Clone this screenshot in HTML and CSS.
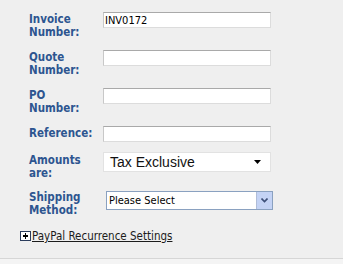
FILE: index.html
```html
<!DOCTYPE html>
<html lang="en">
<head>
  <meta charset="UTF-8">
  <title>Invoice Details</title>
  <link rel="stylesheet" href="styles.css">
</head>
<body>

  <div class="form">
    <div class="row">
      <label class="lbl">Invoice<br>Number:</label>
      <input class="txt" type="text" value="INV0172">
    </div>
    <div class="row">
      <label class="lbl">Quote<br>Number:</label>
      <input class="txt" type="text">
    </div>
    <div class="row">
      <label class="lbl">PO<br>Number:</label>
      <input class="txt" type="text">
    </div>
    <div class="row row-one">
      <label class="lbl">Reference:</label>
      <input class="txt" type="text">
    </div>
    <div class="row row-sel">
      <label class="lbl">Amounts<br>are:</label>
      <div class="amounts">
        <span>Tax Exclusive</span>
        <svg class="caret" width="7" height="4" viewBox="0 0 7 4"><path d="M0 0h7L3.5 4z" fill="#000"/></svg>
      </div>
    </div>
    <div class="row row-ship">
      <label class="lbl">Shipping<br>Method:</label>
      <div class="shipping">
        <span class="ship-val">Please Select</span>
        <span class="ship-btn">
          <svg width="7" height="5" viewBox="0 0 7 5"><path d="M0.5 0.5l3 3 3-3" fill="none" stroke="#3d4f78" stroke-width="1.6"/></svg>
        </span>
      </div>
    </div>

    <div class="more">
      <span class="plus"></span>
      <a href="#">PayPal Recurrence Settings</a>
    </div>
  </div>

  <div class="bottom"></div>

</body>
</html>
```

FILE: styles.css
```css
body {
  margin: 0;
  padding: 0;
  background: #efefef;
  font-family: 'DejaVu Sans Condensed', 'DejaVu Sans', sans-serif;
  font-size: 11px;
  height: 264px;
  display: flex;
  flex-direction: column;
}
.form {
  padding: 12px 0 0 29px;
  flex: 1;
}
.row {
  display: flex;
  align-items: flex-start;
  margin-bottom: 11px;
}
.lbl {
  width: 74px;
  padding-top: 1px;
  line-height: 13px;
  font-size: 11.5px;
  font-weight: bold;
  color: #2d5590;
}
.row-one {
  margin-bottom: 10px;
}
.txt {
  box-sizing: border-box;
  width: 168px;
  height: 16px;
  margin: 0;
  padding: 0 1px;
  font-family: inherit;
  font-size: 11px;
  color: #000;
  background: #fff;
  border: 1px solid #dcdcdc;
  border-top-color: #a9a9a9;
  border-left-color: #c8c8c8;
  outline: none;
}
.row-sel .lbl {
  padding-top: 2px;
}
.amounts {
  box-sizing: border-box;
  width: 168px;
  height: 20px;
  display: flex;
  align-items: center;
  justify-content: space-between;
  padding: 0 9px 0 6px;
  background: #fff;
  border: 1px solid #e2e2e2;
  font-family: 'Liberation Sans', Arial, sans-serif;
  font-size: 14px;
  color: #111;
}
.row-ship {
  margin-bottom: 0;
}
.row-ship .lbl {
  padding-top: 0;
}
.shipping {
  box-sizing: border-box;
  width: 167px;
  height: 19px;
  margin-left: 3px;
  display: flex;
  background: #fff;
  border: 1px solid #8aa1c0;
}
.ship-val {
  flex: 1;
  padding: 2px 0 0 2px;
  color: #000;
}
.ship-btn {
  width: 15px;
  display: flex;
  align-items: center;
  justify-content: center;
  background: #c4d3f5;
  border-left: 1px solid #b0bdd8;
}
.more {
  display: flex;
  align-items: center;
  margin: 12px 0 0 -9px;
  font-size: 11.5px;
}
.plus {
  box-sizing: border-box;
  width: 11px;
  height: 10px;
  margin-right: 1px;
  border: 1px solid #2b3c5c;
  background: #fff;
  position: relative;
}
.plus::before, .plus::after {
  content: '';
  position: absolute;
  background: #000;
}
.plus::before {
  left: 2px;
  top: 3px;
  width: 5px;
  height: 2px;
}
.plus::after {
  left: 4px;
  top: 1px;
  width: 1px;
  height: 6px;
}
.more a {
  color: #1c1c1c;
  text-decoration: underline;
}
.bottom {
  height: 5px;
  border-top: 1px solid #d6d6d6;
  background: #f4f4f4;
}
```
